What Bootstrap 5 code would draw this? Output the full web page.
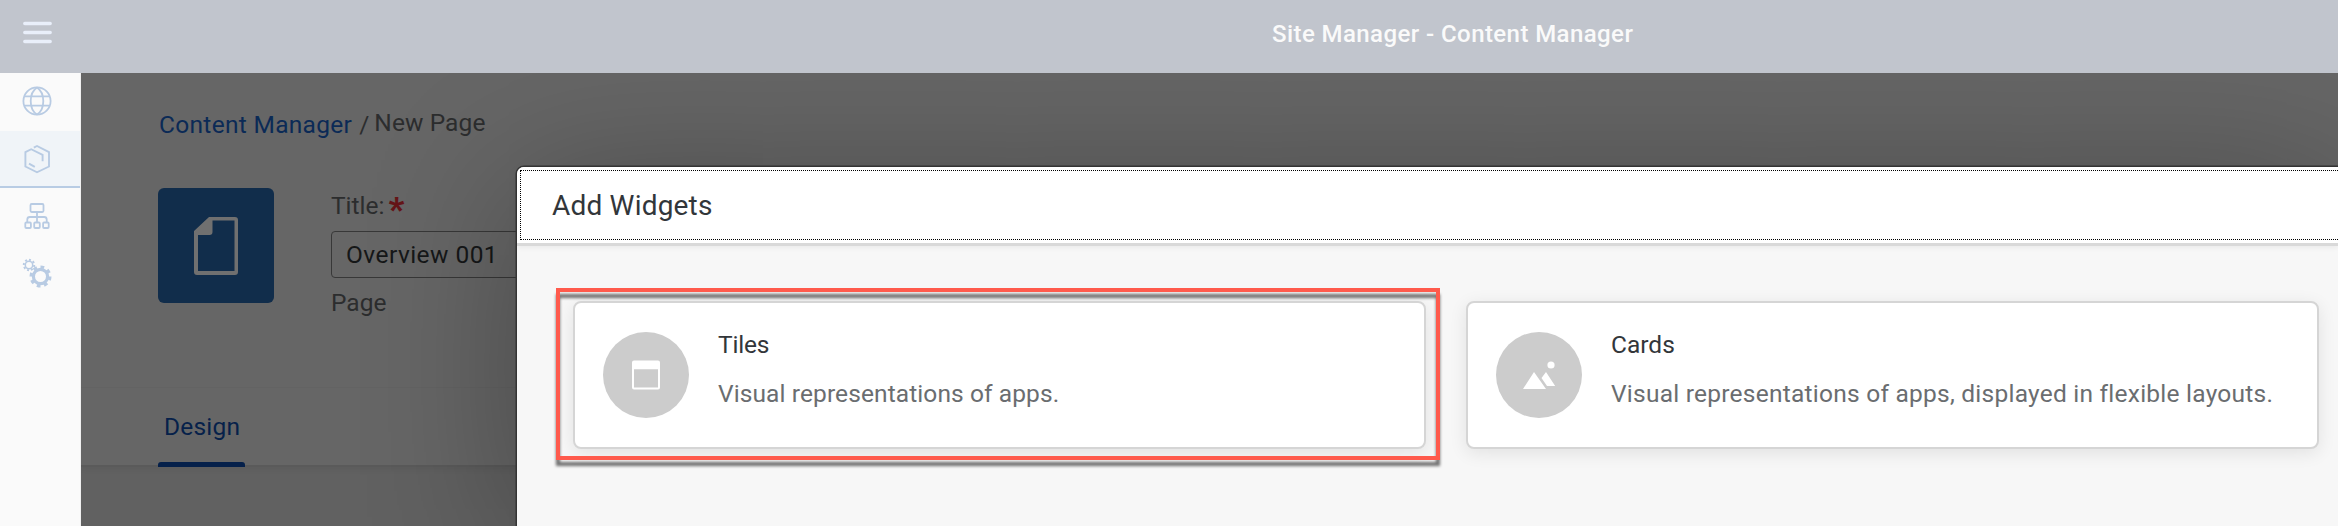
<!DOCTYPE html>
<html lang="en">
<head>
<meta charset="utf-8">
<title>Site Manager - Content Manager</title>
<link href="https://cdn.jsdelivr.net/npm/bootstrap@5.3.0/dist/css/bootstrap.min.css" rel="stylesheet">
<script src="https://cdn.jsdelivr.net/npm/bootstrap@5.3.0/dist/js/bootstrap.bundle.min.js"></script>
<style>
  body { font-family: Roboto, "Open Sans", sans-serif; font-size: 24.5px; line-height: 30px; color: #32363a; background: #666; height: 526px; }
  svg { display: block; flex: none; }
  .shell-bar { height: 73px; background: #c1c5cd; color: #fafafa; padding: 0 0 7px 23px; flex: none; position: relative; z-index: 3; }
  .shell-title { margin-left: 1220px; letter-spacing: .42px; font-weight: 500; font-size: 24px; padding-top: 2px; }
  .side-rail { width: 81px; background: #fafafa; border-right: 1px solid #f0f0f0; flex: none; color: #b8cbe3; position: relative; z-index: 3; }
  .rail-link { height: 57px; padding: 0 7px 2px 0; }
  .rail-link:first-child { height: 58px; }
  .rail-link.active { background: #f0f4f8; box-shadow: inset 0 -2px #b8cce4; }
  .workspace { background: #616161; color: #2c2d2e; min-width: 0; }
  .page-head { height: 394px; background: #666; border-bottom: 2px solid #5a5a5a; box-shadow: 0 2px 6px rgba(0,0,0,.06); padding: 37px 0 0 78px; }
  .crumbs { height: 78px; }
  .crumb-link { color: #0b2a56; text-decoration: none; letter-spacing: .3px; }
  .crumb-link + span { margin-left: 7px; }
  .crumb-here { margin-top: -2px; margin-left: 5px; letter-spacing: .1px; }
  .object-row { margin-left: -1px; height: 130px; }
  .object-icon { width: 116px; height: 115px; border-radius: 6px; background: #112d4b; color: #707070; flex: none; }
  .object-form { margin: 3px 0 0 57px; width: 400px; }
  .star { color: #651518; font-weight: 900; font-size: 34px; line-height: 36px; height: 30px; margin-left: 4px; }
  .title-field { height: 47px; border: 1px solid #383838; border-radius: 4px; color: #151718; padding: 0 15px 0 14px; letter-spacing: .45px; margin-top: 10px; }
  .field-note { margin-top: 10px; }
  .tab-strip { height: 79px; margin: 69px 0 0 -78px; border-top: 1px solid #636363; padding-left: 77px; }
  .tab-on { width: 87px; height: 79px; padding: 24px 0 0 6px; color: #06214a; letter-spacing: .2px; position: relative; z-index: 1; }
  .tab-on i { height: 5px; margin-left: -6px; background: #05204a; border-radius: 3px 3px 0 0; }
  .add-dialog { position: absolute; z-index: 2; left: 517px; top: 167px; right: 0; bottom: 0; background: #f7f7f7; border-radius: 7px 0 0 0; box-shadow: 0 0 0 1.5px #343434, 0 20px 150px rgba(0,0,0,.32); }
  .dialog-head { height: 79px; background: #fff; border-bottom: 3px solid #d9d9d9; border-radius: 7px 0 0 0; padding: 3px 0 3px 3px; box-shadow: 0 2px 5px rgba(0,0,0,.05); }
  .focus-line { border: 1px dotted #000; border-right: 0; height: 70px; padding: 1px 0 0 31px; font-size: 28px; letter-spacing: .2px; }
  .choices { gap: 40px; padding: 55px 0 0 56px; }
  .choice { position: relative; width: 853px; height: 148px; background: #fff; border: 2px solid #d5d5d5; border-radius: 8px; box-shadow: 0 4px 18px rgba(0,0,0,.09); padding: 0 0 0 28px; flex: none; }
  .disc { width: 86px; height: 86px; border-radius: 50%; background: #ccc; color: #fff; flex: none; }
  .choice-text { margin: 0 0 12px 29px; }
  .choice-name { letter-spacing: -.2px; }
  .choice-desc { color: #6a6d70; margin-top: 19px; letter-spacing: .24px; white-space: nowrap; }
  .choice-desc.brief { letter-spacing: .1px; }
  .callout { position: absolute; left: -19px; top: -15px; width: 884px; height: 172px; border: 4px solid #ff5a4c; filter: drop-shadow(0 6px 1.5px rgba(0,0,0,.55)); }
</style>
</head>
<body class="d-flex flex-column overflow-hidden position-relative">
<header class="shell-bar d-flex align-items-center">
  <svg width="29" height="24" viewBox="0 0 29 24" stroke="#e9effa" stroke-width="3.4" stroke-linecap="round"><path d="M1.8 2.500h25.400M1.800 11.500h25.400M1.800 20.500h25.400"/></svg>
  <div class="shell-title">Site Manager - Content Manager</div>
</header>
<div class="d-flex flex-grow-1">
  <nav class="side-rail d-flex flex-column">
    <a class="rail-link d-flex align-items-center justify-content-center">
      <svg width="30" height="30" viewBox="0 0 30 30" fill="none" stroke="#b8cbe3" stroke-width="1.8"><circle cx="15" cy="15" r="13.6"/><path d="M2.400 10.300h25.200M2.400 19.700h25.200M15 1.400C11 4 8.700 9.500 8.700 15S11 26 15 28.600M15 1.400C19 4 21.300 9.500 21.300 15S19 26 15 28.600"/></svg>
    </a>
    <a class="rail-link active d-flex align-items-center justify-content-center">
      <svg width="30" height="30" viewBox="0 0 30 30" fill="none" stroke="#b8cbe3" stroke-width="1.900"><path d="M11.800 3.600L15 2l12 6.200v14.300L15 28.300 3.400 22.500V8.200L9.200 5.200l11.400 5.600v6.500M7 19.600l5.800 3.200"/></svg>
    </a>
    <a class="rail-link d-flex align-items-center justify-content-center">
      <svg width="30" height="30" viewBox="0 0 30 30" fill="none" stroke="#b8cbe3" stroke-width="1.800"><rect x="8.500" y="3" width="13" height="8" rx="1.200"/><rect x="3.300" y="21.500" width="5.600" height="5.500" rx="1"/><rect x="12.200" y="21.500" width="5.600" height="5.500" rx="1"/><rect x="21.100" y="21.500" width="5.600" height="5.500" rx="1"/><path d="M15 11v10.500M5.300 21.500V18.500q0-2.500 2.500-2.500h14.400q2.500 0 2.500 2.500v3"/></svg>
    </a>
    <a class="rail-link d-flex align-items-center justify-content-center">
      <svg width="30" height="30" viewBox="0 0 30 30" fill="none" stroke="#b8cbe3"><circle cx="18.500" cy="18.500" r="7.100" stroke-width="3.200"/><circle cx="18.500" cy="18.500" r="9.500" stroke-width="3" stroke-dasharray="3.730 3.730" pathLength="59.690"/><circle cx="7" cy="7" r="3.700" stroke-width="1.500"/><circle cx="7" cy="7" r="5.200" stroke-width="2" stroke-dasharray="2 2.080" pathLength="32.640"/></svg>
    </a>
  </nav>
  <main class="workspace flex-grow-1">
    <section class="page-head">
      <div class="crumbs d-flex"><a class="crumb-link" href="#">Content Manager</a><span>/</span><span class="crumb-here">New Page</span></div>
      <div class="object-row d-flex">
        <div class="object-icon d-flex align-items-center justify-content-center">
          <svg width="44" height="58" viewBox="0 0 44 58"><path fill="#707070" fill-rule="evenodd" d="M15 0H41q3 0 3 3V55q0 3-3 3H3q-3 0-3-3V14zM18.500 3.500V15q0 3-3 3H4V54H40.500V3.500z"/></svg>
        </div>
        <div class="object-form">
          <div class="d-flex"><span>Title:</span><span class="star">*</span></div>
          <div class="title-field d-flex align-items-center">Overview 001</div>
          <div class="field-note">Page</div>
        </div>
      </div>
      <div class="tab-strip"><div class="tab-on d-flex flex-column justify-content-between">Design<i></i></div></div>
    </section>
  </main>
</div>
<div class="add-dialog" role="dialog" aria-label="Add Widgets">
  <div class="dialog-head"><div class="focus-line d-flex align-items-center">Add Widgets</div></div>
  <div class="choices d-flex">
    <div class="choice d-flex align-items-center">
      <div class="disc d-flex align-items-center justify-content-center"><svg width="30" height="30" viewBox="0 0 30 30"><path fill="#fff" fill-rule="evenodd" d="M3 .5h24q2 0 2 2v25q0 2-2 2H3q-2 0-2-2v-25q0-2 2-2zM3 9.200v18.300h24V9.200z"/></svg></div>
      <div class="choice-text"><div class="choice-name">Tiles</div><div class="choice-desc brief">Visual representations of apps.</div></div>
      <div class="callout"></div>
    </div>
    <div class="choice d-flex align-items-center">
      <div class="disc d-flex align-items-center justify-content-center"><svg width="34" height="30" viewBox="0 0 34 30" fill="#fff"><path d="M1 29L12 12l12 17zM19.500 18L24 12l9.200 14H25z"/><circle cx="29" cy="5" r="3.600"/></svg></div>
      <div class="choice-text"><div>Cards</div><div class="choice-desc">Visual representations of apps, displayed in flexible layouts.</div></div>
    </div>
  </div>
</div>
</body>
</html>
